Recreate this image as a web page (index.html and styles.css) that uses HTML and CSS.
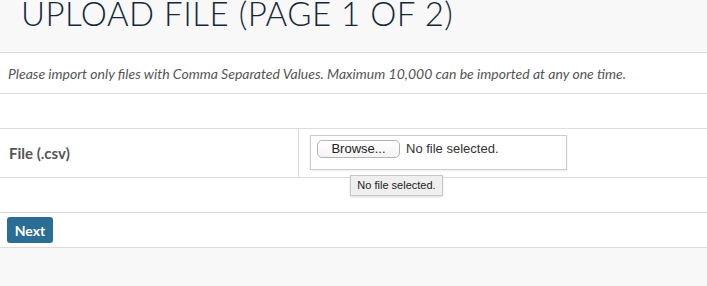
FILE: index.html
```html
<!DOCTYPE html>
<html lang="en">
<head>
    <meta charset="UTF-8">
    <meta name="viewport" content="width=device-width, initial-scale=1.0">
    <title>Upload File</title>
    <link rel="stylesheet" href="styles.css">
</head>
<body>
    <header class="page-header">
        <h1>UPLOAD FILE (PAGE 1 OF 2)</h1>
    </header>

    <div class="panel">
        <div class="row intro">
            <p>Please import only files with Comma Separated Values. Maximum 10,000 can be imported at any one time.</p>
        </div>
        <div class="row spacer"></div>
        <div class="row field">
            <label class="field-label">File (.csv)</label>
            <div class="field-input">
                <div class="file-box">
                    <button class="browse" type="button">Browse...</button>
                    <span class="file-name">No file selected.</span>
                </div>
                <div class="tooltip">No file selected.</div>
            </div>
        </div>
        <div class="row spacer"></div>
        <div class="row actions">
            <button class="btn-next" type="button">Next</button>
        </div>
    </div>
</body>
</html>
```

FILE: styles.css
```css
* {
    margin: 0;
    padding: 0;
    box-sizing: border-box;
}

body {
    background: #f8f8f8;
    font-family: 'Lato', sans-serif;
    color: #555;
    min-height: 100vh;
}

.page-header {
    height: 53px;
    padding-left: 21px;
    border-bottom: 1px solid #dcdcdc;
    overflow: hidden;
}

.page-header h1 {
    font-size: 33px;
    font-weight: 300;
    line-height: 27px;
    letter-spacing: 0.5px;
    color: #14283a;
    white-space: nowrap;
}

.panel {
    background: #fff;
}

.row {
    border-bottom: 1px solid #dcdcdc;
}

.intro {
    height: 41px;
    display: flex;
    align-items: center;
    padding-left: 8px;
}

.intro p {
    font-size: 14px;
    font-style: italic;
    color: #555;
}

.spacer {
    height: 35px;
}

.field {
    height: 49px;
    display: flex;
}

.field-label {
    width: 299px;
    border-right: 1px solid #dcdcdc;
    padding-left: 9px;
    display: flex;
    align-items: center;
    font-size: 15px;
    font-weight: 700;
    color: #555;
}

.field-input {
    position: relative;
    padding: 6px 0 0 11px;
}

.file-box {
    width: 257px;
    height: 35px;
    border: 1px solid #ccc;
    box-shadow: 0 1px 2px rgba(0, 0, 0, 0.08);
    padding: 4px 0 0 6px;
    display: flex;
    align-items: flex-start;
    gap: 6px;
    font-family: 'Liberation Sans', sans-serif;
}

.browse {
    width: 83px;
    height: 18px;
    border: 1px solid #b4b4b4;
    border-radius: 5px;
    background: linear-gradient(#fff, #f4f4f4);
    font-family: 'Liberation Sans', sans-serif;
    font-size: 13px;
    color: #222;
    line-height: 16px;
}

.file-name {
    font-size: 13px;
    color: #333;
    line-height: 18px;
}

.tooltip {
    position: absolute;
    left: 51px;
    top: 46px;
    width: 93px;
    height: 21px;
    background: #efefef;
    border: 1px solid #c8c8c8;
    box-shadow: 0 1px 2px rgba(0, 0, 0, 0.15);
    font-family: 'Liberation Sans', sans-serif;
    font-size: 11px;
    color: #222;
    line-height: 19px;
    text-align: center;
}

.actions {
    height: 35px;
    padding: 4px 0 0 7px;
}

.btn-next {
    width: 46px;
    height: 26px;
    border: none;
    border-radius: 3px;
    background: #2b6e95;
    color: #fff;
    font-family: 'Lato', sans-serif;
    font-size: 14px;
    font-weight: 700;
}
```
